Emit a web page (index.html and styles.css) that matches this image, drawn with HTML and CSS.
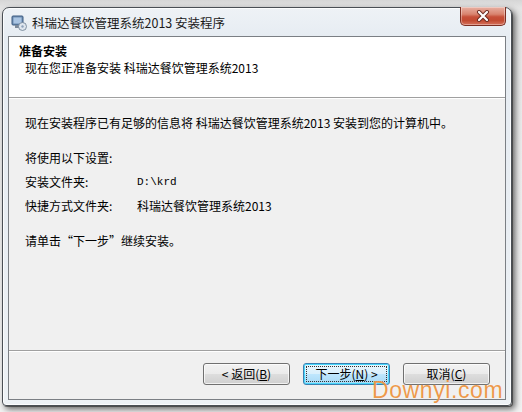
FILE: index.html
```html
<!DOCTYPE html>
<html lang="zh-CN">
<head>
<meta charset="utf-8">
<title>科瑞达餐饮管理系统2013 安装程序</title>
<link rel="stylesheet" href="styles.css">
</head>
<body>
<div class="window">
  <div class="titlebar">
    <svg class="appicon" width="16" height="16" viewBox="0 0 16 16">
      <rect x="1" y="1" width="11" height="9" rx="1" fill="#6f8fb3" stroke="#3d5a80" stroke-width="1"/>
      <rect x="2.5" y="2.5" width="8" height="6" fill="#a9c4e2"/>
      <rect x="4" y="10" width="5" height="3" fill="#7d8a99"/>
      <circle cx="11.5" cy="11.5" r="4" fill="#dfe6ee" stroke="#6b7c90" stroke-width="0.8"/>
      <circle cx="11.5" cy="11.5" r="1.2" fill="#8fa3ba"/>
    </svg>
    <span class="title">科瑞达餐饮管理系统2013 安装程序</span>
    <div class="close">
      <svg width="16" height="12" viewBox="0 0 16 12">
        <path d="M4 2 L12 10 M12 2 L4 10" stroke="#6a2a20" stroke-width="4" stroke-linecap="round"/>
        <path d="M4 2 L12 10 M12 2 L4 10" stroke="#ffffff" stroke-width="2.2" stroke-linecap="round"/>
      </svg>
    </div>
  </div>
  <div class="client">
    <div class="header">
      <div class="h-title">准备安装</div>
      <div class="h-sub">现在您正准备安装 科瑞达餐饮管理系统2013</div>
    </div>
    <div class="content">
      <p class="line first">现在安装程序已有足够的信息将 科瑞达餐饮管理系统2013 安装到您的计算机中。</p>
      <p class="line section">将使用以下设置:</p>
      <div class="line row"><span class="key">安装文件夹:</span><span class="val mono">D:\krd</span></div>
      <div class="line row"><span class="key">快捷方式文件夹:</span><span class="val">科瑞达餐饮管理系统2013</span></div>
      <p class="line section">请单击“下一步”继续安装。</p>
    </div>
    <div class="footer">
      <button class="btn">&lt; 返回(<u>B</u>)</button>
      <button class="btn default"><span class="focus">下一步(<u>N</u>) &gt;</span></button>
      <button class="btn">取消(<u>C</u>)</button>
    </div>
  </div>
  <div class="watermark">Downyi.com</div>
</div>
</body>
</html>
```

FILE: styles.css
```css
* { box-sizing: border-box; }

html, body {
  margin: 0;
  padding: 0;
}

body {
  width: 522px;
  height: 412px;
  overflow: hidden;
  background: linear-gradient(180deg, #d6d6d6 0px, #e4e4e4 8px, #ececec 40%, #f2f2f2 100%);
  font-family: "Noto Sans CJK SC", "Liberation Sans", sans-serif;
  font-size: 12px;
  color: #000;
}

.window {
  position: relative;
  margin: 7px 0 0 2px;
  width: 510px;
  height: 399px;
  border: 1px solid #4a4f55;
  border-radius: 7px 7px 4px 4px;
  background: linear-gradient(180deg, #eef2f6 0px, #e6ecf2 30px, #e9eef3 60%, #edf1f5 100%);
  box-shadow: 3px 3px 6px rgba(0,0,0,0.6), 1px 1px 0 rgba(0,0,0,0.4), inset 0 0 0 1px rgba(255,255,255,0.8);
  display: flex;
  flex-direction: column;
}

.titlebar {
  height: 28px;
  display: flex;
  align-items: center;
  padding-left: 8px;
  flex: none;
}

.appicon {
  flex: none;
  margin-top: 1px;
}

.title {
  margin-left: 5px;
  font-family: "Noto Sans CJK SC", sans-serif;
  font-size: 12.5px;
  color: #1a1a1a;
  margin-top: 1px;
}

.close {
  margin-left: auto;
  margin-right: 5px;
  align-self: flex-start;
  margin-top: -1px;
  width: 46px;
  height: 19px;
  border: 1px solid #7c2e22;
  border-top: none;
  border-radius: 0 0 5px 5px;
  background: linear-gradient(180deg, #e8b0a2 0%, #d9846f 40%, #c75039 55%, #c24b32 75%, #d6725c 100%);
  box-shadow: inset 0 0 0 1px rgba(255,255,255,0.35);
  display: flex;
  align-items: center;
  justify-content: center;
}

.client {
  margin: 0 5px;
  height: 364px;
  border: 1px solid #7b7f84;
  background: #f0f0f0;
  display: flex;
  flex-direction: column;
  flex: none;
}

.header {
  height: 61px;
  background: #fff;
  border-bottom: 1px solid #a0a0a0;
  padding: 6px 0 0 10px;
  flex: none;
}

.h-title {
  font-weight: bold;
  line-height: 15px;
}

.h-sub {
  margin-top: 2px;
  padding-left: 6px;
  line-height: 15px;
}

.content {
  flex: 1;
  border-top: 1px solid #fff;
  padding: 16px 0 0 16px;
}

.line {
  margin: 0;
  line-height: 16px;
  height: 16px;
  white-space: nowrap;
}

.first { margin-top: 0; }
.section { margin-top: 19px; }
.row { margin-top: 8px; display: flex; }

.key {
  width: 112px;
  flex: none;
}

.mono {
  font-family: "Liberation Mono", monospace;
  font-size: 11px;
}

.footer {
  flex: none;
  height: 49px;
  border-top: 1px solid #a0a0a0;
  box-shadow: inset 0 1px 0 #fff;
  display: flex;
  justify-content: flex-end;
  align-items: flex-start;
  gap: 13px;
  padding: 12px 15px 0 0;
}

.btn {
  width: 87px;
  height: 22px;
  padding: 0;
  border: 1px solid #707070;
  border-radius: 3px;
  background: linear-gradient(180deg, #f2f2f2 0%, #ebebeb 48%, #dddddd 52%, #cfcfcf 100%);
  box-shadow: inset 0 0 0 1px rgba(255,255,255,0.7);
  font-family: "Noto Sans CJK SC", sans-serif;
  font-size: 12px;
  line-height: 14px;
  color: #000;
  display: flex;
  align-items: center;
  justify-content: center;
}

.btn u {
  text-decoration: underline;
}

.btn.default {
  border-color: #3c7fb1;
  background: linear-gradient(180deg, #eaf6fd 0%, #d9f0fc 48%, #bee6fd 52%, #a7d9f5 100%);
  box-shadow: inset 0 0 0 1px #48d7fb;
  padding: 2px;
}

.focus {
  width: 100%;
  height: 100%;
  border: 1px dotted #333;
  display: flex;
  align-items: center;
  justify-content: center;
}

.watermark {
  position: absolute;
  left: 369px;
  top: 373px;
  font-family: "Liberation Sans", sans-serif;
  font-size: 23px;
  letter-spacing: 0.6px;
  color: rgba(236, 140, 50, 0.88);
  text-shadow: 0 0 1px rgba(255,255,255,0.6);
  line-height: 18px;
}
```
